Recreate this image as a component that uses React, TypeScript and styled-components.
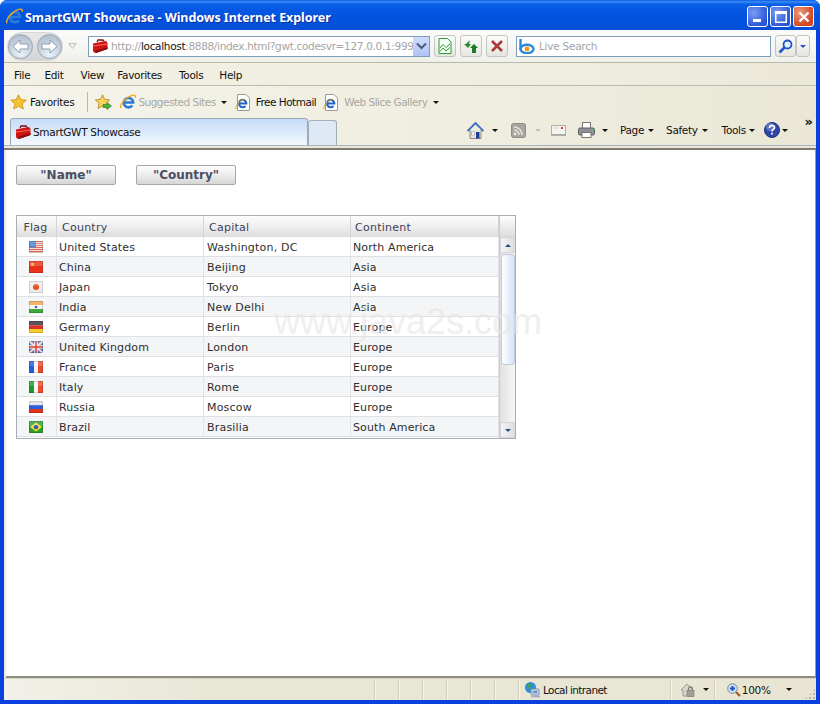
import React from "react";
import styled, { createGlobalStyle } from "styled-components";

const Global = createGlobalStyle`
  html, body { margin: 0; padding: 0; background: #fff; overflow: hidden; }
  #root { width: 820px; height: 704px; }
`;
const UI = `"DejaVu Sans", "Noto Sans", sans-serif`;

const Win = styled.div`
  width: 820px; height: 704px; display: flex; flex-direction: column; position: relative; overflow: hidden;
  background: #0a3fe0; border-radius: 7px 7px 0 0; font-family: ${UI};
`;
const TitleBar = styled.div`
  height: 30px; flex: none; display: flex; align-items: center; padding: 3px 6px 0 6px; box-sizing: border-box;
  background: linear-gradient(180deg, #0a5ae8 0%, #3b8cf5 6%, #0a5fe8 14%, #0353e0 50%, #0352dd 80%, #0a4dd6 100%);
`;
const TitleText = styled.div`
  margin-left: 2px; padding-top: 1px; color: #fff; font: bold 12.5px "Noto Sans", sans-serif; letter-spacing: -0.05px; flex: 1; text-shadow: 1px 1px 0 #0a2fa0; white-space: nowrap;
`;
const WinBtn = styled.div<{ $close?: boolean }>`
  width: 21px; height: 21px; margin-left: 2px; border: 1px solid #fff; border-radius: 3px; box-sizing: border-box;
  display: flex; align-items: center; justify-content: center;
  background: ${p => p.$close ? "radial-gradient(circle at 30% 30%, #ec9a80, #d2481f 70%)" : "radial-gradient(circle at 30% 30%, #7a9cf2, #2a55d8 75%)"};
`;
const Body = styled.div`
  flex: 1; min-height: 0; display: flex; flex-direction: column; margin: 0 4px 4px 4px; background: #ece9d8;
`;
const NavRow = styled.div`
  height: 33px; flex: none; display: flex; align-items: center; box-sizing: border-box;
  background: linear-gradient(180deg, #fbfbfb, #f0f0ea); border-bottom: 1px solid #bdb9a8;
`;
const NavPill = styled.div`
  width: 56px; height: 29px; margin-left: 3px; display: flex; align-items: center; justify-content: space-between; padding: 0; box-sizing: border-box; flex: none;
  border-radius: 15px; background: linear-gradient(180deg, #e8e8e8, #d5d5d5); border: 1px solid #d6d6d6;
`;
const RoundBtn = styled.div`
  width: 25px; height: 25px; border-radius: 50%; box-sizing: border-box; border: 1px solid #9aa7b5; display: flex; align-items: center; justify-content: center;
  background: radial-gradient(circle at 50% 85%, #e8f2fa 0%, #c4d0dc 55%, #aab6c4 100%);
`;
const AddressBox = styled.div`
  width: 342px; height: 21px; margin-left: 11px; box-sizing: border-box; border: 1px solid #7f9db9; background: #fff; display: flex; align-items: center; padding-left: 3px; overflow: hidden; flex: none;
`;
const Url = styled.div`
  flex: 1; min-width: 0; font-size: 10.5px; letter-spacing: -0.32px; color: #a5a5a5; white-space: nowrap; margin-left: 3px; overflow: hidden;
  b { font-weight: normal; color: #111; }
`;
const Drop = styled.div`
  width: 16px; height: 19px; flex: none; background: linear-gradient(180deg, #cfdcfb, #aec4f6); display: flex; align-items: center; justify-content: center;
`;
const SquareBtn = styled.div<{ $ml: number; $w?: number }>`
  width: ${p => p.$w ?? 22}px; height: 22px; margin-left: ${p => p.$ml}px; flex: none; box-sizing: border-box; border: 1px solid #c5c5c0; border-radius: 3px;
  background: linear-gradient(180deg, #fbfbf9, #e6e6e1); display: flex; align-items: center; justify-content: center;
`;
const SearchBox = styled.div`
  width: 255px; height: 21px; margin-left: 8px; flex: none; box-sizing: border-box; border: 1px solid #7f9db9; background: #fff; display: flex; align-items: center; padding-left: 2px;
`;
const SearchHint = styled.span`
  margin-left: 3px; font-size: 10.5px; letter-spacing: -0.25px; color: #a5a5a5;
`;
const MenuRow = styled.div`
  height: 23px; flex: none; display: flex; align-items: center; padding: 2px 0 0 10px; box-sizing: border-box;
  background: linear-gradient(90deg, #f3f1e6, #efedde 70%, #ebe8d8); border-bottom: 1px solid #bcbbb0;
`;
const MenuItem = styled.span<{ $ml?: number }>`
  font-size: 10.5px; letter-spacing: -0.3px; color: #111; margin-left: ${p => p.$ml ?? 0}px;
`;
const Toolbars = styled.div`
  height: 59px; flex: none; box-sizing: border-box; display: flex; flex-direction: column;
  background: linear-gradient(90deg, #f5f4ec, #efedde 60%, #eae7d6);
`;
const FavRow = styled.div`
  height: 32px; flex: none; display: flex; align-items: center; padding-left: 6px;
`;
const Link = styled.span<{ $ml?: number; $dim?: boolean; $tight?: boolean }>`
  font-size: 10.5px; letter-spacing: ${p => p.$tight ? -0.5 : -0.34}px; margin-left: ${p => p.$ml ?? 3}px; color: ${p => p.$dim ? "#a8a8a0" : "#111"}; white-space: nowrap;
`;
const VSep = styled.div<{ $ml: number }>`
  width: 1px; height: 20px; margin-left: ${p => p.$ml}px; background: #b8b6a6; flex: none;
`;
const Caret = styled.span<{ $ml: number; $dim?: boolean }>`
  width: 0; height: 0; flex: none; margin-left: ${p => p.$ml}px; border: 3px solid transparent; border-bottom-width: 0; border-top: 3px solid ${p => p.$dim ? "#c0c0b8" : "#111"};
`;
const TabRow = styled.div`
  height: 27px; flex: none; display: flex; align-items: flex-end; padding-left: 6px; position: relative;
`;
const ActiveTab = styled.div`
  width: 298px; height: 27px; box-sizing: border-box; border: 1px solid #9aa7b8; border-bottom: none; border-radius: 3px 3px 0 0; flex: none;
  background: linear-gradient(180deg, #c5dcf8, #e0ecfb 60%, #f4f8fd); display: flex; align-items: center; padding: 0 0 0 4px;
`;
const TabTitle = styled.span`
  margin-left: 2px; font-size: 10.5px; letter-spacing: -0.3px; color: #111;
`;
const NewTab = styled.div`
  width: 29px; height: 25px; box-sizing: border-box; border: 1px solid #a3aebb; border-bottom: none; border-radius: 3px 3px 0 0; background: #dfe9f6; flex: none;
`;
const Commands = styled.div`
  display: flex; align-items: center; margin-left: 130px; height: 27px; padding-bottom: 3px; box-sizing: border-box;
`;
const Chevrons = styled.span`
  position: absolute; right: 4px; top: -4px; font-size: 13px; font-weight: bold; color: #111; letter-spacing: -1px;
`;
const Rule = styled.div`
  height: 5px; flex: none; box-sizing: border-box; background: #ebe8d8; border-top: 1px solid #a8b3c0; border-bottom: 2px solid #807d70;
`;
const Content = styled.div`
  flex: 1; min-height: 0; margin: 0 0 0 2px; padding: 15px 10px; box-sizing: border-box; background: #fff; position: relative; border-right: 1px solid #a09d90;
  border-bottom: 2px solid #8f8c80;
`;
const Buttons = styled.div`
  display: flex; gap: 20px;
`;
const GwtButton = styled.div`
  width: 100px; height: 20px; box-sizing: border-box; border: 1px solid #a4a8b0; border-radius: 2px; text-align: center;
  font: bold 12px/19px "DejaVu Sans", sans-serif; color: #4a4f60; background: linear-gradient(180deg, #fdfdfd, #f0f0f0 40%, #d6d6d6);
`;
const Grid = styled.div`
  width: 500px; height: 224px; margin-top: 30px; box-sizing: border-box; border: 1px solid #a8acb5; display: flex; overflow: hidden;
`;
const Table = styled.div`
  width: 482px; flex: none; display: flex; flex-direction: column; overflow: hidden;
`;
const Cols = `display: grid; grid-template-columns: 40px 147px 147px 148px;`;
const HeaderRow = styled.div`
  ${Cols} height: 21px; flex: none;
`;
const HeaderCell = styled.div<{ $center?: boolean }>`
  box-sizing: border-box; height: 21px; border-right: 1px solid #d5d5d8; padding: ${p => p.$center ? "0 2px 0 0" : "0 0 0 4px"}; text-align: ${p => p.$center ? "center" : "left"};
  font-size: 11px; line-height: 23px; letter-spacing: 0.25px; color: #3b4256; background: linear-gradient(180deg, #fdfdfd, #ececec 60%, #dcdcdc);
  &:nth-child(2), &:nth-child(3) { padding-left: 5px; }
`;
const DataRow = styled.div<{ $alt: boolean }>`
  ${Cols} height: 20px; flex: none; box-sizing: border-box; background: ${p => p.$alt ? "#f4f5f7" : "#fff"}; border-bottom: 1px solid #dfe0e3;
`;
const Cell = styled.div`
  box-sizing: border-box; border-right: 1px solid #e2e3e6; padding: 2px 0 0 2px; font-size: 11px; line-height: 17px; height: 19px; color: #2f2f2f; white-space: nowrap; letter-spacing: 0.12px;
  &:nth-child(3) { padding-left: 3px; letter-spacing: 0.2px; }
`;
const FlagCell = styled.div`
  box-sizing: border-box; border-right: 1px solid #e2e3e6; display: flex; align-items: center; justify-content: center; padding: 1px 2px 0 0;
`;
const Scroll = styled.div`
  width: 16px; flex: none; display: flex; flex-direction: column; background: linear-gradient(90deg, #e2e2e2, #f8f8f8); border-left: 1px solid #c9cbd0;
`;
const ScrollCorner = styled.div`
  height: 21px; flex: none; background: linear-gradient(180deg, #fdfdfd, #dcdcdc);
`;
const ScrollArrow = styled.div`
  height: 16px; flex: none; background: linear-gradient(90deg, #f4f4f4, #dcdcdc); display: flex; align-items: center; justify-content: center; box-sizing: border-box; border: 1px solid #d5d5d8;
`;
const Thumb = styled.div`
  height: 111px; flex: none; box-sizing: border-box; margin: 1px 0 0 1px; width: 14px; border: 1px solid #c2c9d8; border-radius: 3px; background: linear-gradient(90deg, #fff, #e3eefb 60%, #d6e4f6);
`;
const Track = styled.div`
  flex: 1;
`;
const Watermark = styled.div`
  position: absolute; left: 268px; top: 151px; font: 36px "Liberation Sans", sans-serif; color: #e6e6e6; opacity: .62; white-space: nowrap; pointer-events: none;
`;
const Status = styled.div`
  height: 22px; flex: none; display: flex; align-items: center; box-sizing: border-box; position: relative;
  background: linear-gradient(90deg, #f2f1ea, #e9e7d6 25%, #e8e5d3);
  border-top: 1px solid #d8d6c6;
`;
const StatusSep = styled.div<{ $ml: number }>`
  width: 1px; height: 19px; flex: none; margin-left: ${p => p.$ml}px; background: #cfccb9; border-right: 1px solid #f8f7f0;
`;
const StatusText = styled.span<{ $ml: number; $tight?: boolean }>`
  font-size: 10.5px; letter-spacing: ${p => p.$tight ? -0.6 : -0.3}px; color: #111; margin-left: ${p => p.$ml}px; white-space: nowrap;
`;

const Ic = styled.svg<{ $ml?: number }>`
  flex: none; display: block; margin-left: ${p => p.$ml ?? 0}px;
`;

const Toolbox = ({ ml = 0 }: { ml?: number }) => (
  <Ic $ml={ml} width="16" height="15" viewBox="0 0 16 15">
    <path d="M5 3 L6 1 H11 L12 2" fill="none" stroke="#7a0b0b" strokeWidth="1.3" />
    <path d="M1 4.5 L13 2 Q15 2 15.5 4 V10 L4 14 Q1.5 14 1 12 Z" fill="#cf1414" />
    <path d="M1 7 L15.5 5" stroke="#ff6a5a" strokeWidth="1.2" />
    <path d="M4 14 L15.5 10 V8 L3 12 Z" fill="#8a0a0a" />
  </Ic>
);
const IE = ({ ml = 0, s = 17 }: { ml?: number; s?: number }) => (
  <Ic $ml={ml} width={s} height={s} viewBox="0 0 17 17">
    <path d="M13 12.2 A5 5 0 1 1 14 9 H4.5" fill="none" stroke="#2a7bd8" strokeWidth="2.7" />
    <path d="M1 15.2 C-0.8 11.5 6 3.5 12 1.6 C15 .6 16.8 1.4 16.4 4" fill="none" stroke="#eda91c" strokeWidth="1.4" />
  </Ic>
);
const DocIE = ({ ml = 0 }: { ml?: number }) => (
  <Ic $ml={ml} width="16" height="17" viewBox="0 0 16 17">
    <path d="M2.5 .5 H11 L14.5 4 V16.5 H2.5 Z" fill="#fff" stroke="#9a9a9a" />
    <path d="M10.5 12 A3.7 3.7 0 1 1 11.4 9.5 H4.5" fill="none" stroke="#2466c8" strokeWidth="2" />
    <path d="M1 15 C0 12 5 6 10 5" fill="none" stroke="#e9a81e" />
  </Ic>
);
const Star = ({ ml = 0 }: { ml?: number }) => (
  <Ic $ml={ml} width="17" height="16" viewBox="0 0 16 16" preserveAspectRatio="none">
    <path d="M8 .8 L10.2 5.6 L15.4 6.2 L11.5 9.7 L12.6 15 L8 12.3 L3.4 15 L4.5 9.7 L.6 6.2 L5.8 5.6 Z" fill="#f5c233" stroke="#d09218" strokeWidth=".8" />
  </Ic>
);
const StarAdd = ({ ml = 0 }: { ml?: number }) => (
  <Ic $ml={ml} width="17" height="17" viewBox="0 0 17 17">
    <path d="M7.5 .8 L9.6 5.4 L14.6 6 L10.9 9.3 L12 14.5 L7.5 11.9 L3 14.5 L4.1 9.3 L.4 6 L5.4 5.4 Z" fill="#f8d65a" stroke="#b8891a" strokeWidth=".9" />
    <path d="M8 10.5 H12 V8.5 L16.5 12 L12 15.5 V13.5 H8 Z" fill="#45b337" stroke="#2a7c20" strokeWidth=".6" />
  </Ic>
);
const Arrow = ({ dir }: { dir: "l" | "r" }) => (
  <svg width="17" height="15" viewBox="0 0 17 15" style={dir === "r" ? { transform: "scaleX(-1)" } : undefined}>
    <path d="M1 7.5 L8 1 V5 H16 V10 H8 V14 Z" fill="#fff" stroke="#8d9cad" strokeWidth="1" />
  </svg>
);
const DownChevron = () => (
  <svg width="11" height="8" viewBox="0 0 11 8"><path d="M1 1.5 L5.5 6 L10 1.5" fill="none" stroke="#4a5a7a" strokeWidth="2" /></svg>
);
const Compat = () => (
  <svg width="14" height="16" viewBox="0 0 14 16">
    <path d="M1 .5 H9.5 L13 4 V15.5 H1 Z" fill="#f2fff2" stroke="#2f9a3a" />
    <path d="M2 10 L5 6.5 L8 9.5 L12 6 M2 13.5 L5 10 L8 13 L12 9.5" fill="none" stroke="#2f9a3a" />
  </svg>
);
const Refresh = () => (
  <svg width="16" height="15" viewBox="0 0 16 15">
    <path d="M7 1 L3 5 H1 L5 9 L8 5 H6 Z" fill="#2b8a2b" />
    <path d="M9 14 V9 H7 L11 5 L15 9 H13 V14 Z" fill="#1f7a24" />
  </svg>
);
const Stop = () => (
  <svg width="12" height="12" viewBox="0 0 12 12"><path d="M1 1 L11 11 M11 1 L1 11" stroke="#a93a3a" strokeWidth="2.6" /></svg>
);
const Bing = () => (
  <Ic width="17" height="15" viewBox="0 0 17 15">
    <path d="M1.5 0 V11" stroke="#2a8ad8" strokeWidth="2.4" />
    <ellipse cx="8" cy="10" rx="6.5" ry="4.2" fill="none" stroke="#2a8ad8" strokeWidth="2.4" />
    <circle cx="8" cy="10" r="2.4" fill="#f7941d" />
  </Ic>
);
const Magnifier = ({ color = "#1d55c8" }: { color?: string }) => (
  <svg width="15" height="15" viewBox="0 0 15 15">
    <circle cx="9.5" cy="5.5" r="4" fill="#e8f0ff" stroke={color} strokeWidth="1.8" />
    <path d="M6.5 8.5 L1.5 13.5" stroke={color} strokeWidth="2.6" />
  </svg>
);
const Home = ({ ml }: { ml: number }) => (
  <Ic $ml={ml} width="17" height="17" viewBox="0 0 17 17">
    <path d="M3 8 V16.5 H14 V8" fill="#e8e6da" stroke="#8a8a80" />
    <path d="M.5 9 L8.5 1 L16.5 9" fill="none" stroke="#3b6fc4" strokeWidth="1.8" />
    <rect x="9" y="10" width="3.5" height="6.5" fill="#1c3f9a" />
    <rect x="4.5" y="10" width="3" height="3" fill="#fff" stroke="#8a8a80" strokeWidth=".5" />
  </Ic>
);
const Rss = ({ ml }: { ml: number }) => (
  <Ic $ml={ml} width="15" height="15" viewBox="0 0 15 15">
    <rect x=".5" y=".5" width="14" height="14" rx="2" fill="#a6a69e" stroke="#8c8c85" />
    <circle cx="4" cy="11" r="1.4" fill="#e8e8e0" />
    <path d="M3 7 A5 5 0 0 1 8 12 M3 4 A8 8 0 0 1 11 12" fill="none" stroke="#e8e8e0" strokeWidth="1.5" />
  </Ic>
);
const Mail = ({ ml }: { ml: number }) => (
  <Ic $ml={ml} width="15" height="11" viewBox="0 0 15 11">
    <rect x=".5" y=".5" width="14" height="10" fill="#f4f4f0" stroke="#b0b0a8" />
    <path d="M1 9.5 H14" stroke="#a8a8a8" />
    <rect x="10" y="2" width="2" height="2" fill="#d04040" />
    <path d="M3 3 H8" stroke="#d0d0c8" />
  </Ic>
);
const Printer = ({ ml }: { ml: number }) => (
  <Ic $ml={ml} width="17" height="16" viewBox="0 0 17 16">
    <rect x="4.5" y=".5" width="8" height="6" fill="#fff" stroke="#777" />
    <rect x=".5" y="6" width="16" height="7" rx="1.5" fill="#8c9096" stroke="#5e6268" />
    <rect x="4" y="10.5" width="9" height="5" fill="#fff" stroke="#777" />
    <rect x="13" y="7.5" width="2" height="1.5" fill="#50d050" />
  </Ic>
);
const Help = ({ ml }: { ml: number }) => (
  <Ic $ml={ml} width="16" height="16" viewBox="0 0 16 16">
    <circle cx="8" cy="8" r="7.5" fill="#2d48a8" stroke="#1c2f78" />
    <circle cx="6" cy="5" r="4" fill="#7f95dc" opacity=".6" />
    <path d="M5.5 6 Q5.7 3.4 8 3.4 Q10.5 3.4 10.5 5.6 Q10.5 7 8.8 7.7 Q8 8.1 8 9.6" fill="none" stroke="#fff" strokeWidth="1.7" />
    <rect x="7.1" y="10.7" width="1.8" height="1.8" fill="#fff" />
  </Ic>
);
const Globe = ({ ml }: { ml: number }) => (
  <Ic $ml={ml} width="17" height="16" viewBox="0 0 17 16">
    <circle cx="6.5" cy="5.5" r="5.5" fill="#2f8fd8" />
    <path d="M3 2 Q6 1 7 3 Q6 6 3 7 Z M8 6 Q11 5 11 8 L9 10 Z" fill="#3aa83a" />
    <rect x="7" y="7" width="8" height="6" rx="1" fill="#dfe6f0" stroke="#7a8aa0" />
    <rect x="8.5" y="8.5" width="5" height="3" fill="#6a9ad8" />
    <rect x="7" y="13.5" width="9" height="2" fill="#a8b0bc" />
  </Ic>
);
const Lock = ({ ml }: { ml: number }) => (
  <Ic $ml={ml} width="16" height="16" viewBox="0 0 16 16">
    <path d="M1 8 L7 2 L13 8 V14 H3 V8 Z" fill="#d6d6cd" stroke="#9a9a92" />
    <rect x="7" y="8.5" width="7" height="6" fill="#a0a098" stroke="#77776f" strokeWidth=".6" />
    <path d="M8.6 8.5 V6.8 A1.9 1.9 0 0 1 12.4 6.8 V8.5" fill="none" stroke="#77776f" strokeWidth="1.1" />
  </Ic>
);
const ZoomIcon = ({ ml }: { ml: number }) => (
  <Ic $ml={ml} width="14" height="14" viewBox="0 0 14 14">
    <circle cx="5.5" cy="5.5" r="4.8" fill="#cfe0f8" stroke="#7a8aa0" />
    <path d="M3 5.5 H8 M5.5 3 V8" stroke="#1d55c8" strokeWidth="1.8" />
    <path d="M9 9 L13 13" stroke="#a05a20" strokeWidth="2.2" />
  </Ic>
);
const Grip = styled.div`
  position: absolute; right: 1px; bottom: 1px; width: 10px; height: 10px;
  background-image: radial-gradient(circle at 1px 1px, #b8b5a4 1px, transparent 1.2px);
  background-size: 4px 4px;
  clip-path: polygon(100% 0, 100% 100%, 0 100%);
`;

const w = 14, h = 12;
const Flag: React.FC<{ children: React.ReactNode }> = ({ children }) => (
  <svg width={w} height={h} viewBox="0 0 14 12" style={{ display: "block" }}>
    {children}
    <rect width="14" height="5" fill="#fff" opacity=".18" />
    <rect x=".5" y=".5" width="13" height="11" fill="none" stroke="#000" strokeOpacity=".14" />
  </svg>
);
const Stripes3V = (a: string, b: string, c: string) => (
  <Flag><rect width="5" height="12" fill={a} /><rect x="5" width="4" height="12" fill={b} /><rect x="9" width="5" height="12" fill={c} /></Flag>
);
const Stripes3H = (a: string, b: string, c: string) => (
  <Flag><rect width="14" height="4" fill={a} /><rect y="4" width="14" height="4" fill={b} /><rect y="8" width="14" height="4" fill={c} /></Flag>
);
const flags: Record<string, React.ReactNode> = {
  us: <Flag>
    <rect width="14" height="12" fill="#f6e6e2" />
    {[0, 2, 4, 6, 8, 10].map(y => <rect key={y} y={y} width="14" height="1.1" fill="#d86a5c" />)}
    <rect width="7" height="6.5" fill="#4a82d8" />
  </Flag>,
  cn: <Flag><rect width="14" height="12" fill="#e8321a" /><rect x="2" y="2" width="3" height="3" fill="#f6c93a" opacity=".8" /></Flag>,
  jp: <Flag><rect width="14" height="12" fill="#ececec" /><circle cx="7" cy="6" r="3" fill="#f04a20" /></Flag>,
  in: <Flag><rect width="14" height="4" fill="#f5a34a" /><rect y="4" width="14" height="4" fill="#f6f6f6" /><rect y="8" width="14" height="4" fill="#3fa83a" /><circle cx="7" cy="6" r="1.3" fill="#2a66c0" /></Flag>,
  de: Stripes3H("#333333", "#d8322a", "#f5cc2c"),
  gb: <Flag>
    <rect width="14" height="12" fill="#4a6fc8" />
    <path d="M0 0 L14 12 M14 0 L0 12" stroke="#f0d8d8" strokeWidth="2" />
    <path d="M7 0 V12 M0 6 H14" stroke="#f2e4e4" strokeWidth="3.6" />
    <path d="M7 0 V12 M0 6 H14" stroke="#d8402a" strokeWidth="1.6" />
  </Flag>,
  fr: Stripes3V("#1f5fe0", "#f4f4f4", "#ee4a2c"),
  it: Stripes3V("#1f9a2a", "#f4f4f4", "#ee4a2c"),
  ru: Stripes3H("#e2e2e2", "#2a5fd8", "#e0341c"),
  br: <Flag><rect width="14" height="12" fill="#2e9e2e" /><path d="M7 1.5 L13 6 L7 10.5 L1 6 Z" fill="#f5dc2c" /><circle cx="7" cy="6" r="2.3" fill="#2a5fb8" /></Flag>,
};

const rows: [string, string, string, string][] = [
  ["us", "United States", "Washington, DC", "North America"],
  ["cn", "China", "Beijing", "Asia"],
  ["jp", "Japan", "Tokyo", "Asia"],
  ["in", "India", "New Delhi", "Asia"],
  ["de", "Germany", "Berlin", "Europe"],
  ["gb", "United Kingdom", "London", "Europe"],
  ["fr", "France", "Paris", "Europe"],
  ["it", "Italy", "Rome", "Europe"],
  ["ru", "Russia", "Moscow", "Europe"],
  ["br", "Brazil", "Brasilia", "South America"],
];

export default function App() {
  return (
    <Win>
      <Global />
      <TitleBar>
        <IE />
        <TitleText>SmartGWT Showcase - Windows Internet Explorer</TitleText>
        <WinBtn><svg width="9" height="11" viewBox="0 0 9 11"><rect x="0" y="8" width="8" height="3" fill="#fff" /></svg></WinBtn>
        <WinBtn><svg width="12" height="12" viewBox="0 0 12 12"><rect x=".75" y="1.5" width="10.5" height="9.75" fill="none" stroke="#fff" strokeWidth="1.5" /><rect y="0" width="12" height="3" fill="#fff" /></svg></WinBtn>
        <WinBtn $close><svg width="12" height="12" viewBox="0 0 12 12"><path d="M1.5 1.5 L10.5 10.5 M10.5 1.5 L1.5 10.5" stroke="#fff" strokeWidth="2.4" /></svg></WinBtn>
      </TitleBar>
      <Body>
        <NavRow>
          <NavPill>
            <RoundBtn><Arrow dir="l" /></RoundBtn>
            <RoundBtn><Arrow dir="r" /></RoundBtn>
          </NavPill>
          <Ic $ml={5} width="9" height="6" viewBox="0 0 9 6"><path d="M.7 .7 H8.3 L4.5 5.3 Z" fill="none" stroke="#b8b8b8" /></Ic>
          <AddressBox>
            <Toolbox />
            <Url>http://<b>localhost</b>:8888/index.html?gwt.codesvr=127.0.0.1:999</Url>
            <Drop><DownChevron /></Drop>
          </AddressBox>
          <SquareBtn $ml={4}><Compat /></SquareBtn>
          <SquareBtn $ml={4}><Refresh /></SquareBtn>
          <SquareBtn $ml={4}><Stop /></SquareBtn>
          <SearchBox><Bing /><SearchHint>Live Search</SearchHint></SearchBox>
          <SquareBtn $ml={4} $w={21}><Magnifier /></SquareBtn>
          <SquareBtn $ml={0} $w={14}><Caret $ml={0} style={{ borderTopColor: "#1d55c8" }} /></SquareBtn>
        </NavRow>
        <MenuRow>
          <MenuItem>File</MenuItem>
          <MenuItem $ml={14}>Edit</MenuItem>
          <MenuItem $ml={17}>View</MenuItem>
          <MenuItem $ml={13}>Favorites</MenuItem>
          <MenuItem $ml={17}>Tools</MenuItem>
          <MenuItem $ml={16}>Help</MenuItem>
        </MenuRow>
        <Toolbars>
          <FavRow>
            <Star />
            <Link>Favorites</Link>
            <VSep $ml={13} />
            <StarAdd ml={7} />
            <IE ml={8} s={16} />
            <Link $dim $tight $ml={2}>Suggested Sites</Link>
            <Caret $ml={5} />
            <DocIE ml={8} />
            <Link $tight $ml={5}>Free Hotmail</Link>
            <DocIE ml={7} />
            <Link $dim $tight $ml={5}>Web Slice Gallery</Link>
            <Caret $ml={6} />
          </FavRow>
          <TabRow>
            <ActiveTab>
              <Toolbox />
              <TabTitle>SmartGWT Showcase</TabTitle>
            </ActiveTab>
            <NewTab />
            <Commands>
              <Home ml={0} />
              <Caret $ml={8} />
              <Rss ml={13} />
              <Caret $ml={9} $dim />
              <Mail ml={10} />
              <Printer ml={12} />
              <Caret $ml={7} />
              <Link $ml={12}>Page</Link>
              <Caret $ml={4} />
              <Link $ml={12}>Safety</Link>
              <Caret $ml={4} />
              <Link $ml={14}>Tools</Link>
              <Caret $ml={3} />
              <Help ml={9} />
              <Caret $ml={2} />
            </Commands>
            <Chevrons>»</Chevrons>
          </TabRow>
        </Toolbars>
        <Rule />
        <Content>
          <Buttons>
            <GwtButton>"Name"</GwtButton>
            <GwtButton>"Country"</GwtButton>
          </Buttons>
          <Grid>
            <Table>
              <HeaderRow>
                <HeaderCell $center>Flag</HeaderCell>
                <HeaderCell>Country</HeaderCell>
                <HeaderCell>Capital</HeaderCell>
                <HeaderCell>Continent</HeaderCell>
              </HeaderRow>
              {rows.map((r, i) => (
                <DataRow key={r[0]} $alt={i % 2 === 1}>
                  <FlagCell>{flags[r[0]]}</FlagCell>
                  <Cell>{r[1]}</Cell>
                  <Cell>{r[2]}</Cell>
                  <Cell>{r[3]}</Cell>
                </DataRow>
              ))}
            </Table>
            <Scroll>
              <ScrollCorner />
              <ScrollArrow><Caret $ml={0} style={{ transform: "rotate(180deg)", borderTopColor: "#2a4a88" }} /></ScrollArrow>
              <Thumb />
              <Track />
              <ScrollArrow><Caret $ml={0} style={{ borderTopColor: "#2a4a88" }} /></ScrollArrow>
            </Scroll>
          </Grid>
          <Watermark>www.java2s.com</Watermark>
        </Content>
        <Status>
          <StatusSep $ml={370} />
          <StatusSep $ml={22} />
          <StatusSep $ml={22} />
          <StatusSep $ml={22} />
          <StatusSep $ml={22} />
          <StatusSep $ml={22} />
          <StatusSep $ml={22} />
          <Globe ml={4} />
          <StatusText $tight $ml={2}>Local intranet</StatusText>
          <StatusSep $ml={63} />
          <Lock ml={8} />
          <Caret $ml={7} />
          <StatusSep $ml={5} />
          <ZoomIcon ml={11} />
          <StatusText $ml={1}>100%</StatusText>
          <Caret $ml={15} />
          <Grip />
        </Status>
      </Body>
    </Win>
  );
}
